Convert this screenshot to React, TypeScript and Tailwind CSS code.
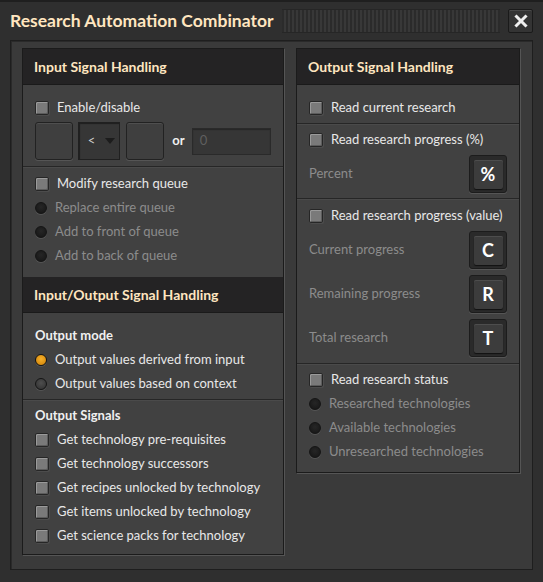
import React from 'react';

const font = { fontFamily: 'Lato, "Noto Sans", sans-serif' };

function Checkbox() {
  return (
    <span className="w-[14px] h-[14px] shrink-0 rounded-[2px] border border-[#262626] bg-[#7a7a7a] shadow-[inset_1px_1px_0_#9a9a9a,inset_-1px_-1px_0_#5c5c5c,1px_1px_0_#4c4c4c]" />
  );
}

function Radio({ state = 'off' }: { state?: 'off' | 'on' | 'idle' }) {
  const fill =
    state === 'on'
      ? 'bg-[radial-gradient(circle_at_50%_40%,#f7b12a_0%,#d98e12_70%)]'
      : state === 'idle'
      ? 'bg-[radial-gradient(circle_at_50%_40%,#4e4e4e_0%,#383838_70%)]'
      : 'bg-[radial-gradient(circle_at_50%_40%,#262626_0%,#1a1a1a_70%)]';
  return (
    <span
      className={`w-[12px] h-[12px] shrink-0 rounded-full border border-[#151515] shadow-[0_1px_0_#555] ${fill}`}
    />
  );
}

function CheckRow({ label }: { label: string }) {
  return (
    <div className="flex items-center h-6 gap-[8px] text-[13px] text-[#e8e8e8]">
      <Checkbox />
      <span>{label}</span>
    </div>
  );
}

function RadioRow({ label, state = 'off', dim = true }: { label: string; state?: 'off' | 'on' | 'idle'; dim?: boolean }) {
  return (
    <div className={`flex items-center h-6 gap-[8px] text-[13px] ${dim ? 'text-[#8c8c8c]' : 'text-[#e8e8e8]'}`}>
      <Radio state={state} />
      <span>{label}</span>
    </div>
  );
}

function Divider() {
  return <div className="h-[2px] border-t border-[#262626] bg-[#4a4a4a]" />;
}

function Header({ title }: { title: string }) {
  return (
    <div className="h-[36px] shrink-0 bg-[#242324] flex items-center px-[11px] text-[14px] font-bold text-[#ffe6c0] border-b border-[#1a1a1a]">
      {title}
    </div>
  );
}

function SlotButton() {
  return (
    <div className="w-[38px] h-[38px] rounded-[3px] bg-[#3f3f3f] border border-[#222] shadow-[inset_0_1px_0_#4f4f4f,0_1px_0_#555]" />
  );
}

function LetterButton({ ch }: { ch: string }) {
  return (
    <div className="w-[38px] h-[38px] rounded-[3px] bg-[#2a2a2a] border border-[#1c1c1c] shadow-[0_1px_0_#555] flex items-center justify-center">
      <div className="w-[29px] h-[29px] rounded-[2px] bg-[#3c3c3c] shadow-[inset_0_1px_0_#4d4d4d,0_1px_1px_#111] flex items-center justify-center text-[18px] font-bold text-white">
        {ch}
      </div>
    </div>
  );
}

function LabelRow({ label, ch }: { label: string; ch: string }) {
  return (
    <div className="h-[44px] flex items-center justify-between text-[13px] text-[#8c8c8c]">
      <span>{label}</span>
      <LetterButton ch={ch} />
    </div>
  );
}

export default function App() {
  return (
    <div
      className="w-[543px] h-[582px] bg-[#2f2f2f] border-t-2 border-[#1f1f1f] flex flex-col overflow-hidden"
      style={font}
    >
      {/* title bar */}
      <div className="h-[26px] mt-[6px] flex items-center pl-[10px] pr-[10px]">
        <span className="text-[17.5px] font-bold text-[#ffe6c0] whitespace-nowrap">Research Automation Combinator</span>
        <div className="flex-1 h-[24px] ml-[9px] mr-[8px] border-y border-[#262626] bg-[repeating-linear-gradient(90deg,#2b2b2b_0px,#2b2b2b_2px,#383838_2px,#383838_4px)]" />
        <div className="w-[25px] h-[24px] rounded-[2px] bg-[#343434] border border-[#1a1a1a] shadow-[inset_0_1px_0_#4a4a4a] flex items-center justify-center">
          <svg width="14" height="14" viewBox="0 0 14 14">
            <path d="M2.5 2.5 L11.5 11.5 M11.5 2.5 L2.5 11.5" stroke="#f0f0f0" strokeWidth="3" strokeLinecap="square" />
          </svg>
        </div>
      </div>

      {/* inner frame */}
      <div className="mx-[10px] mt-[6px] h-[530px] bg-[#3a3a3a] border border-[#1e1e1e] shadow-[inset_1px_1px_0_#2a2a2a] pl-[11px] pr-[12px] pt-[7px] flex gap-[12px] items-start">
        {/* left panel */}
        <div className="w-[262px] h-[507px] flex flex-col bg-[#414141] border border-[#1b1b1b] shadow-[1px_1px_0_#555]">
          <Header title="Input Signal Handling" />
          <div className="px-[12px] pt-[13px] pb-[6px]">
            <div className="flex items-center h-5 gap-[8px] text-[13px] text-[#e8e8e8]">
              <Checkbox />
              <span>Enable/disable</span>
            </div>
            <div className="mt-[4px] flex items-center h-[38px]">
              <SlotButton />
              <div className="ml-[5px] w-[43px] h-[38px] bg-[#363636] border border-[#202020] shadow-[inset_1px_1px_1px_#1f1f1f] flex items-center pl-[9px] gap-[10px] text-[13px] text-[#cfcfcf]">
                <span>&lt;</span>
                <svg width="10" height="6" viewBox="0 0 10 6">
                  <path d="M0 0 H10 L5 6 Z" fill="#1c1c1c" />
                </svg>
              </div>
              <div className="ml-[6px]">
                <SlotButton />
              </div>
              <span className="ml-[8px] text-[13px] font-bold text-[#f0f0f0]">or</span>
              <div className="ml-[7px] w-[80px] h-[27px] bg-[#363636] border border-[#2a2a2a] shadow-[inset_0_1px_1px_#262626] flex items-center pl-[7px] text-[13px] text-[#5f5f5f]">
                0
              </div>
            </div>
          </div>
          <Divider />
          <div className="px-[12px] pt-[4px] pb-[9px]">
            <CheckRow label="Modify research queue" />
            <RadioRow label="Replace entire queue" />
            <RadioRow label="Add to front of queue" />
            <RadioRow label="Add to back of queue" />
          </div>
          <Header title="Input/Output Signal Handling" />
          <div className="px-[12px] pt-[11px] pb-[3px]">
            <div className="h-6 flex items-center text-[13px] font-bold text-[#f0f0f0]">Output mode</div>
            <RadioRow label="Output values derived from input" state="on" dim={false} />
            <RadioRow label="Output values based on context" state="idle" dim={false} />
          </div>
          <Divider />
          <div className="px-[12px] pt-[3px] pb-[5px]">
            <div className="h-6 flex items-center text-[13px] font-bold text-[#f0f0f0]">Output Signals</div>
            <CheckRow label="Get technology pre-requisites" />
            <CheckRow label="Get technology successors" />
            <CheckRow label="Get recipes unlocked by technology" />
            <CheckRow label="Get items unlocked by technology" />
            <CheckRow label="Get science packs for technology" />
          </div>
        </div>

        {/* right panel */}
        <div className="w-[224px] h-[425px] flex flex-col bg-[#414141] border border-[#1b1b1b] shadow-[1px_1px_0_#555]">
          <Header title="Output Signal Handling" />
          <div className="px-[12px] pt-[11px] pb-[3px]">
            <CheckRow label="Read current research" />
          </div>
          <Divider />
          <div className="px-[12px] pt-[3px] pb-[5px]">
            <CheckRow label="Read research progress (%)" />
            <div className="mt-[3px] h-[38px] flex items-center justify-between text-[13px] text-[#8c8c8c]">
              <span>Percent</span>
              <LetterButton ch="%" />
            </div>
          </div>
          <Divider />
          <div className="px-[12px] pt-[4px] pb-[3px]">
            <CheckRow label="Read research progress (value)" />
            <LabelRow label="Current progress" ch="C" />
            <LabelRow label="Remaining progress" ch="R" />
            <LabelRow label="Total research" ch="T" />
          </div>
          <Divider />
          <div className="px-[12px] pt-[3px] pb-[8px]">
            <CheckRow label="Read research status" />
            <RadioRow label="Researched technologies" />
            <RadioRow label="Available technologies" />
            <RadioRow label="Unresearched technologies" />
          </div>
        </div>
      </div>
    </div>
  );
}
